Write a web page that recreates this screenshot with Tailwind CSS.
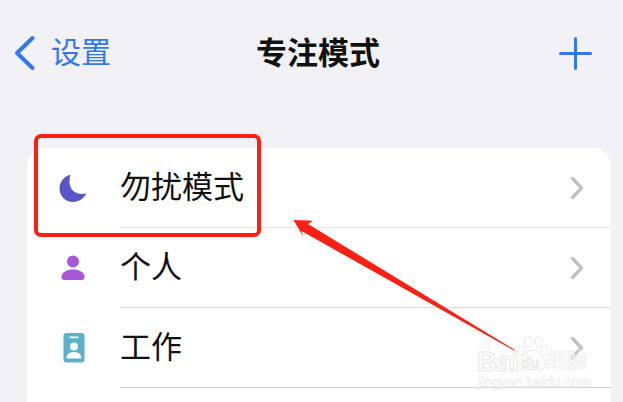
<!DOCTYPE html>
<html lang="zh-CN">
<head>
  <meta charset="UTF-8">
  <meta name="viewport" content="width=device-width, initial-scale=1.0">
  <title>专注模式</title>
  <script src="https://cdn.jsdelivr.net/npm/@tailwindcss/browser@4"></script>
</head>
<body class="relative w-[623px] h-[402px] overflow-hidden bg-[#f1f1f6] font-['Liberation_Sans','Noto_Sans_CJK_SC',sans-serif]">
  <!-- nav bar -->
  <div class="h-[148px] pl-[14px] pr-[31px] pb-[42px] flex items-center justify-between">
    <div class="w-[120px] flex items-center gap-[15px] text-[#3478f0]">
      <svg width="22" height="36" viewBox="0 0 22 36" fill="none" stroke="currentColor" stroke-width="4" stroke-linecap="round" stroke-linejoin="round"><path d="M18.500 3 L3 18 L18.500 33"/></svg>
      <span class="text-[30px] leading-none whitespace-nowrap">设置</span>
    </div>
    <h1 class="text-[31px] leading-none font-bold text-[#111]">专注模式</h1>
    <div class="w-[90px] flex justify-end">
      <svg width="33" height="33" viewBox="0 0 33 33" stroke="#3478f0" stroke-width="3" stroke-linecap="round"><path d="M16.500 1.500 V31.500 M1.500 16.500 H31.500"/></svg>
    </div>
  </div>

  <!-- list card -->
  <div class="ml-[27px] w-[584px] bg-white rounded-t-[18px]">
    <div class="flex h-[80px]">
      <div class="w-[93px] flex items-center justify-center">
        <svg width="28" height="28" viewBox="0 0 28 28" class="-ml-[1px]"><path d="M11.500 0.500 C5 2.500 0.500 8 0.500 14.500 C0.500 22 6.500 28 14 28 C20 28 25 24.500 27.500 19 C26 19.800 24.500 20 22.500 20 C15.500 20 10.500 14.500 10.500 8 C10.500 5.500 10.800 3 11.500 0.500 Z" fill="#5a55c8"/></svg>
      </div>
      <div class="flex-1 flex items-center justify-between border-b border-[#e8e8ea] pr-[27px]">
        <span class="text-[31px] leading-none text-[#111]">勿扰模式</span>
        <svg width="14" height="24" viewBox="0 0 14 24" fill="none" stroke="#c2c2c6" stroke-width="3.500" stroke-linecap="round" stroke-linejoin="round"><path d="M2.500 2.500 L11.500 12 L2.500 21.500"/></svg>
      </div>
    </div>
    <div class="flex h-[80px]">
      <div class="w-[93px] flex items-center justify-center">
        <svg width="24" height="26" viewBox="0 0 24 26" fill="#a658d8" class="-ml-[1px] mt-[-1px]"><circle cx="12" cy="6.500" r="6"/><path d="M0.500 22 C0.500 17 6 14.500 12 14.500 C18 14.500 23.500 17 23.500 22 C23.500 24 22.500 25 21 25 H3 C1.500 25 0.500 24 0.500 22 Z"/></svg>
      </div>
      <div class="flex-1 flex items-center justify-between border-b border-[#d8d8da] pr-[27px]">
        <span class="text-[31px] leading-none text-[#111]">个人</span>
        <svg width="14" height="24" viewBox="0 0 14 24" fill="none" stroke="#c2c2c6" stroke-width="3.500" stroke-linecap="round" stroke-linejoin="round"><path d="M2.500 2.500 L11.500 12 L2.500 21.500"/></svg>
      </div>
    </div>
    <div class="flex h-[80px]">
      <div class="w-[93px] flex items-center justify-center">
        <svg width="22" height="30" viewBox="0 0 22 30"><rect width="21" height="29.500" x="0.500" rx="3" fill="#5cb0c8"/><rect x="6.500" y="3.500" width="9" height="1.800" rx="0.900" fill="#fff"/><circle cx="11" cy="13.500" r="4" fill="#fff"/><path d="M3.500 25.500 C3.500 21 7 19 11 19 C15 19 18.500 21 18.500 25.500 Z" fill="#fff"/></svg>
      </div>
      <div class="flex-1 flex items-center justify-between border-b border-[#d0d0d2] pr-[27px]">
        <span class="text-[31px] leading-none text-[#111]">工作</span>
        <svg width="14" height="24" viewBox="0 0 14 24" fill="none" stroke="#c2c2c6" stroke-width="3.500" stroke-linecap="round" stroke-linejoin="round"><path d="M2.500 2.500 L11.500 12 L2.500 21.500"/></svg>
      </div>
    </div>
    <div class="h-[15px]"></div>
  </div>

  <!-- annotation: red box -->
  <div class="absolute left-[34px] top-[134px] w-[227px] h-[103px] border-4 border-[#fb2014] rounded-[7px]"></div>

  <!-- annotation: watermark -->
  <div class="absolute left-[477px] top-[335px] w-[110px] h-[60px] text-white/70 [-webkit-text-stroke:1px_#e6e6e6]">
    <span class="absolute left-0 top-[14px] text-[27px] leading-none font-bold">Bai</span>
    <svg class="absolute left-[38px] top-0" width="34" height="38" viewBox="0 0 36 38" fill="none" stroke="#e6e6e6" stroke-width="1"><ellipse cx="7" cy="15" rx="3.500" ry="5"/><ellipse cx="14" cy="6" rx="4" ry="5.500"/><ellipse cx="25" cy="6" rx="4" ry="5.500"/><ellipse cx="31" cy="15" rx="3.500" ry="5"/><path d="M18 15 C12 15 10 21 6 25 C1 31 6 37 13 36 C16 35 20 35 24 36 C31 37 35 30 31 25 C27 21 25 15 18 15 Z"/></svg>
    <span class="absolute left-[44px] top-[20px] text-[15px] leading-none font-bold">du</span>
    <span class="absolute left-[70px] top-[16px] text-[20px] leading-none font-bold [-webkit-text-stroke:0.600px_#e6e6e6]">经验</span>
    <span class="absolute left-[1px] top-[40px] text-[14px] leading-none whitespace-nowrap [-webkit-text-stroke:0.500px_#e8e8e8]">jingyan.baidu.com</span>
  </div>

  <!-- annotation: red arrow -->
  <svg class="absolute left-0 top-0" width="623" height="402" viewBox="0 0 623 402"><polygon points="293.500,220 313,220.800 308,224 515,350 514,350.500 301.500,231 303.500,237" fill="#fb2014"/></svg>
</body>
</html>
